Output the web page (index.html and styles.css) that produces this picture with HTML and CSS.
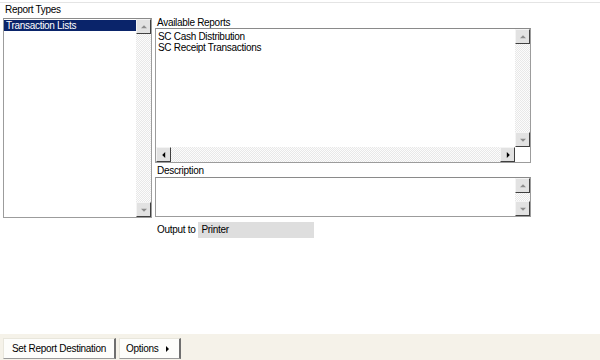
FILE: index.html
```html
<!DOCTYPE html>
<html lang="en">
<head>
    <meta charset="UTF-8">
    <title>Reports</title>
    <link rel="stylesheet" href="styles.css">
</head>
<body>
    <div class="top-line"></div>

    <div class="content">
        <div class="left-col">
            <div class="label types-label">Report Types</div>
            <div class="listbox types-box">
                <div class="list-items">
                    <div class="item selected">Transaction Lists</div>
                </div>
                <div class="vscroll">
                    <div class="sbtn up"></div>
                    <div class="track"></div>
                    <div class="sbtn down"></div>
                </div>
            </div>
        </div>

        <div class="right-col">
            <div class="label avail-label">Available Reports</div>
            <div class="listbox avail-box">
                <div class="avail-main">
                    <div class="list-items">
                        <div class="item">SC Cash Distribution</div>
                        <div class="item">SC Receipt Transactions</div>
                    </div>
                    <div class="vscroll">
                        <div class="sbtn up"></div>
                        <div class="track"></div>
                        <div class="sbtn down"></div>
                    </div>
                </div>
                <div class="hscroll">
                    <div class="sbtn left"></div>
                    <div class="track"></div>
                    <div class="sbtn right"></div>
                    <div class="corner"></div>
                </div>
            </div>

            <div class="label desc-label">Description</div>
            <div class="listbox desc-box">
                <div class="list-items"></div>
                <div class="vscroll">
                    <div class="sbtn up"></div>
                    <div class="track"></div>
                    <div class="sbtn down"></div>
                </div>
            </div>

            <div class="output-row">
                <span class="label">Output to</span>
                <span class="output-value">Printer</span>
            </div>
        </div>
    </div>

    <div class="bottom-bar">
        <button class="bar-button dest-button">Set Report Destination</button>
        <button class="bar-button options-button">Options <span class="arrow"></span></button>
    </div>
</body>
</html>
```

FILE: styles.css
```css
body {
    font-family: "Liberation Sans", Arial, sans-serif;
    font-size: 10px;
    letter-spacing: -0.3px;
    color: #000;
    margin: 0;
    padding: 0;
    width: 600px;
    height: 360px;
    background-color: #fff;
    display: flex;
    flex-direction: column;
    overflow: hidden;
}

.top-line {
    height: 2px;
    border-bottom: 1px solid #e4e4e4;
}

.content {
    display: flex;
    gap: 3px;
    padding-left: 3px;
}

.label {
    line-height: 12px;
}

.left-col {
    width: 149px;
    display: flex;
    flex-direction: column;
}

.types-label {
    height: 14px;
    padding-left: 2px;
    padding-top: 1px;
}

.right-col {
    width: 376px;
    display: flex;
    flex-direction: column;
    padding-top: 14px;
}

.avail-label, .desc-label {
    padding-left: 2px;
    height: 11px;
}

.desc-label {
    height: 12px;
    margin-top: 2px;
}

.listbox {
    border: 1px solid #9c9c9c;
    border-top-color: #8a8a8a;
    background-color: #fff;
    display: flex;
    box-sizing: border-box;
}

.types-box {
    height: 200px;
}

.avail-box {
    height: 135px;
    flex-direction: column;
}

.avail-main {
    flex: 1;
    display: flex;
}

.desc-box {
    height: 40px;
}

.list-items {
    flex: 1;
    padding-top: 1px;
}

.item {
    height: 11px;
    line-height: 11px;
    padding-left: 2px;
    white-space: nowrap;
}

.avail-box .list-items {
    padding-top: 2px;
}

.selected {
    background-color: #0a246a;
    color: #fff;
}

.vscroll {
    width: 15px;
    display: flex;
    flex-direction: column;
}

.hscroll {
    height: 15px;
    display: flex;
}

.track {
    flex: 1;
    background: repeating-conic-gradient(#e8e8e8 0 25%, #fcfcfc 0 50%) 0 0 / 2px 2px;
}

.sbtn {
    width: 15px;
    height: 15px;
    box-sizing: border-box;
    background-color: #e2e2e2;
    border-top: 1px solid #f4f4f4;
    border-left: 1px solid #f4f4f4;
    border-right: 1px solid #404040;
    border-bottom: 1px solid #404040;
    position: relative;
}

.sbtn::after {
    content: "";
    position: absolute;
    left: 50%;
    top: 50%;
    width: 0;
    height: 0;
    border: 3px solid transparent;
}

.sbtn.up::after {
    border-bottom: 3px solid #8c8c8c;
    border-top-width: 0;
    transform: translate(-50%, -60%);
}

.sbtn.down::after {
    border-top: 3px solid #8c8c8c;
    border-bottom-width: 0;
    transform: translate(-50%, -40%);
}

.sbtn.left::after {
    border-right: 3px solid #000;
    border-left-width: 0;
    transform: translate(-60%, -50%);
}

.sbtn.right::after {
    border-left: 3px solid #000;
    border-right-width: 0;
    transform: translate(-40%, -50%);
}

.corner {
    width: 15px;
    background-color: #fff;
}

.output-row {
    display: flex;
    align-items: center;
    gap: 3px;
    margin-top: 5px;
    padding-left: 2px;
}

.output-value {
    width: 113px;
    height: 16px;
    line-height: 16px;
    padding-left: 3px;
    background-color: #dedede;
}

.bottom-bar {
    margin-top: auto;
    height: 26px;
    background-color: #f5f2e9;
    display: flex;
    align-items: center;
    gap: 3px;
    padding-left: 3px;
    padding-top: 2px;
    box-sizing: border-box;
}

.bar-button {
    font-family: "Liberation Sans", Arial, sans-serif;
    font-size: 10px;
    letter-spacing: -0.3px;
    height: 21px;
    padding: 0;
    background-color: #fdfdfb;
    border: 1px solid #e8e6dc;
    border-right: 2px solid #6f6f6f;
    border-bottom: 1px solid #9a9a9a;
    color: #000;
    white-space: nowrap;
    display: flex;
    align-items: center;
}

.dest-button {
    width: 113px;
    justify-content: center;
}

.options-button {
    width: 62px;
    padding-left: 6px;
}

.arrow {
    width: 0;
    height: 0;
    margin-left: 8px;
    margin-top: 2px;
    border-top: 3px solid transparent;
    border-bottom: 3px solid transparent;
    border-left: 3px solid #000;
}
```
